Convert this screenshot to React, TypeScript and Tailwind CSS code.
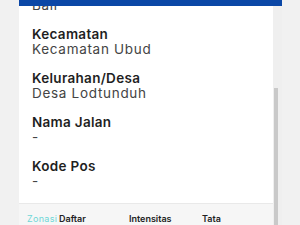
import React from 'react';

interface Field {
  label: string;
  value: string;
}

const fields: Field[] = [
  { label: 'Provinsi', value: 'Bali' },
  { label: 'Kecamatan', value: 'Kecamatan Ubud' },
  { label: 'Kelurahan/Desa', value: 'Desa Lodtunduh' },
  { label: 'Nama Jalan', value: '-' },
  { label: 'Kode Pos', value: '-' },
];

const tabs = [
  { name: 'Zonasi', width: 'w-[32px]', active: true },
  { name: 'Daftar', width: 'w-[70px]', active: false },
  { name: 'Intensitas', width: 'w-[73px]', active: false },
  { name: 'Tata', width: 'w-[40px]', active: false },
];

const App: React.FC = () => {
  return (
    <div className="w-[300px] h-[225px] overflow-hidden flex bg-[#f1f1f1] font-['Inter',sans-serif]">
      <div className="w-[19px] shrink-0" />

      <div className="w-[263px] shrink-0 flex flex-col">
        <div className="h-[6px] bg-[#0b47a6] shrink-0" />

        <div className="flex flex-1 min-h-0">
          <div className="w-[254px] flex flex-col">
            {/* detail list, scrolled down a bit */}
            <div className="h-[197px] bg-white overflow-hidden">
              <div className="pl-[13px] mt-[-24px] flex flex-col gap-[13px]">
                {fields.map((f) => (
                  <div key={f.label} className="flex flex-col">
                    <span className="text-[13.5px] leading-[16px] font-semibold tracking-[0.3px] text-[#1f1f1f]">
                      {f.label}
                    </span>
                    <span className="text-[13.5px] leading-[15px] tracking-[0.7px] text-[#444]">{f.value}</span>
                  </div>
                ))}
              </div>
            </div>

            <div className="flex-1 bg-[#f6f6f6] border-t border-[#e9e9e9] flex pl-[8px] pt-[8px]">
              {tabs.map((t) => (
                <span
                  key={t.name}
                  className={`${t.width} shrink-0 text-[9px] leading-[13px] ${
                    t.active ? 'text-[#6fd6d6] tracking-[0.3px]' : 'font-semibold text-[#222]'
                  }`}
                >
                  {t.name}
                </span>
              ))}
            </div>
          </div>

          {/* scrollbar */}
          <div className="w-[9px] bg-[#efefef] flex flex-col pl-[1px]">
            <div className="h-[82px]" />
            <div className="w-[4px] flex-1 bg-[#c9c9c9]" />
          </div>
        </div>
      </div>
    </div>
  );
};

export default App;
